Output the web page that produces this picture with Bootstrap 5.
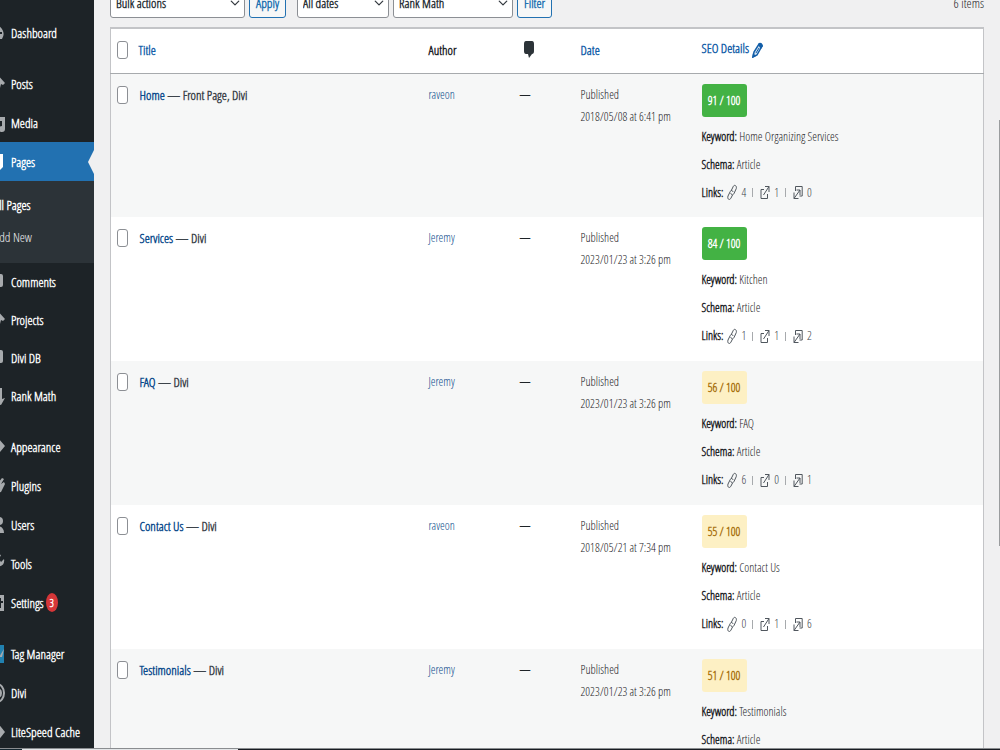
<!DOCTYPE html>
<html lang="en">
<head>
<meta charset="utf-8">
<meta name="viewport" content="width=device-width, initial-scale=1">
<title>Pages</title>
<link href="https://cdn.jsdelivr.net/npm/bootstrap@5.3.0/dist/css/bootstrap.min.css" rel="stylesheet">
<style>
body{font-family:"Open Sans Condensed Light","Open Sans Condensed","Roboto Condensed","Liberation Sans",sans-serif;font-size:13px;line-height:22px;background:#f0f0f1;color:#1d2327}
a{color:#135ea8;text-decoration:none}
.shell{height:100vh}
.side{width:94px;background:#1d2327;padding-top:13px}
.side ul{margin:0 0 0 -15px}
.side .group{margin-bottom:12px}
.side .nav-link{height:39px;padding:0;color:#f6f7f7;font-size:13px;font-weight:600;gap:6px}
.side .tight .nav-link{height:38px}
.side svg{width:20px;height:20px;fill:#a7aaad;flex:none}
.side .nav-link.current{background:#2271b1;color:#fff}
.side .current svg{fill:#fff}
.side .current::after{content:"";margin-left:auto;border:12px solid transparent;border-left:0;border-right:6px solid #f0f0f1}
.submenu{background:#2c3338;height:82px;padding:8px 0 0 9px}
.submenu a{display:block;line-height:32px;color:#f0f0f1}
.submenu a.here{color:#fff;font-weight:600}
.count{background:#d63638;color:#fff;border-radius:50%;width:12px;height:19px;font-size:11px;line-height:19px;margin-left:-4px}
.tools{margin-top:-12px;margin-bottom:9px}
.tools .form-select,.tools .btn{height:30px;font-size:13px;line-height:20px;border-radius:3px;padding:0 6px;font-weight:600}
.tools .form-select{border-color:#8c8f94;color:#2c3338;background-position:right 4px center;background-size:10px 14px;padding:0 16px 0 5px}
.tools .btn{color:#2271b1;border-color:#2271b1;background:#f6f7f7}
.tools .pick-bulk{width:135px}.tools .pick-date{width:92px;margin-left:11px}.tools .pick-rank{width:120px}
.grid-list{background:#fff;border:1px solid #c3c4c7;border-top-width:2px;table-layout:fixed;font-size:12px}
.grid-list>thead>tr>th,.grid-list>tbody>tr>td{background:transparent;box-shadow:none;border:0;padding:10px 0 0;vertical-align:top;color:#1d2327}
.grid-list>thead>tr{height:45px;border-bottom:1px solid #a7aaad}
.grid-list>thead>tr>th{font-size:13px;font-weight:600}
.grid-list>thead>tr>th.seo{padding-top:8px}
.grid-list>tbody>tr{height:144px}
.grid-list>tbody>tr:nth-child(odd){background:#f6f7f7}
.grid-list>tbody>tr>.heading{font-size:13px;font-weight:600;color:#3c434a;padding-left:1px}
.grid-list>tbody>tr>.none{font-size:11px;font-weight:600}
.grid-list>tbody a{color:#0a4b8c}
.c-check{width:28px}.c-author{width:91px}.c-note{width:61px}.c-date{width:121px}.c-seo{width:282px}
.tick{appearance:none;width:11px;height:18px;margin:2px 0 0 6px;border:1px solid #8c8f94;border-radius:3px;background:#fff;display:block}
.score{display:block;width:45px;height:33px;line-height:33px;border-radius:3px;text-align:center;font-weight:600;font-size:12px;margin-bottom:6px}
.good{background:#43b244;color:#fff}
.fair{background:#fdf0c4;color:#a8710f}
.facts{line-height:28px;margin:0}
.facts b{font-weight:600}
.facts svg{width:10px;height:17px;fill:none;stroke:#50575e;stroke-width:1}
.links .num{color:#3c434a}
.links .bar{width:1px;height:9px;background:#a7aaad;margin:0 3px 0 2px}
.status{height:2px;border-top:1px solid #8a8d90}
.status .url{width:216px;background:#e3e6e8}
.status .start{width:22px;background:#14262f}
.status .rest{background:#191c22}
.thumb{width:1px;height:426px;top:120px;background:#9a9c9e}
</style>
</head>
<body class="overflow-hidden">
<svg class="d-none" aria-hidden="true">
<symbol id="i-link" viewBox="0 0 10 17"><path d="M4 7 6 3C7 0 10 1.500 9.300 4.500L7 9.500C6 11.500 4 11 3.800 9M6 8C5.500 6 4 6 3 8L1 12C0 15 2.500 17 4 14L5.500 11"/></symbol>
<symbol id="i-out" viewBox="0 0 10 17"><path d="M4 5.500H1V14.500H7.500V10M5 2.500H9V8M9 2.500 3.500 11"/></symbol>
<symbol id="i-in" viewBox="0 0 10 17"><path d="M2.500 7V2.500H9.200V12H6.500M1 8.500V14.500H5.500M1 14.500 7 6M3.500 6H7V11"/></symbol>
</svg>
<div class="shell d-flex overflow-hidden">
<aside class="side flex-shrink-0 overflow-hidden">
<ul class="list-unstyled group"><li><a class="nav-link d-flex align-items-center" href="#"><svg viewBox="0 0 20 20"><path fill-rule="evenodd" d="M10 2a9 9 0 0 1 7 14H3A9 9 0 0 1 10 2zM9 4v2h2V4zM15 9v2h2V9zM10 13l5-5-3 7h-3z"/></svg>Dashboard</a></li></ul>
<ul class="list-unstyled mb-0">
<li><a class="nav-link d-flex align-items-center" href="#"><svg viewBox="0 0 20 20"><path d="M12 0l8 9-2 2-2-1-1 4v5l-8-8h4l4-4-3-3z"/></svg>Posts</a></li>
<li><a class="nav-link d-flex align-items-center" href="#"><svg viewBox="0 0 20 20"><path fill-rule="evenodd" d="M2 2h12v9H2zM15 4h5v12a3 3 0 1 1-3-3V8h-2z"/></svg>Media</a></li>
<li><a class="nav-link current d-flex align-items-center" href="#" aria-current="page"><svg viewBox="0 0 20 20"><path d="M5 2h13v13l-4 4H5z"/></svg>Pages</a></li>
<li class="submenu"><a class="here" href="#">All Pages</a><a href="#">Add New</a></li>
</ul>
<ul class="list-unstyled group tight">
<li><a class="nav-link d-flex align-items-center" href="#"><svg viewBox="0 0 20 20"><path d="M4 2h12q2 0 2 2v9q0 2-2 2h-6l-4 4v-4H4z"/></svg>Comments</a></li>
<li><a class="nav-link d-flex align-items-center" href="#"><svg viewBox="0 0 20 20"><path d="M12 0l8 9-2 2-2-1-1 4v5l-8-8h4l4-4-3-3z"/></svg>Projects</a></li>
<li><a class="nav-link d-flex align-items-center" href="#"><svg viewBox="0 0 20 20"><path d="M4 2h12q2 0 2 2v9q0 2-2 2H4z"/></svg>Divi DB</a></li>
<li><a class="nav-link d-flex align-items-center" href="#"><svg viewBox="0 0 20 20"><path d="M8 2h9v11l3-1-4 7-7-2zM3 10h4v7H3z"/></svg>Rank Math</a></li>
</ul>
<ul class="list-unstyled group">
<li><a class="nav-link d-flex align-items-center" href="#"><svg viewBox="0 0 20 20"><path d="M14 2l6 7-5 6-4-2-5 5 6-9z"/></svg>Appearance</a></li>
<li><a class="nav-link d-flex align-items-center" href="#"><svg viewBox="0 0 20 20"><path d="M17 2l2 1-3 5 3-2 1 2-4 8-6 1-5 3 3-7z"/></svg>Plugins</a></li>
<li><a class="nav-link d-flex align-items-center" href="#"><svg viewBox="0 0 20 20"><circle cx="14" cy="6" r="4"/><path d="M7 18c0-9 12-9 12 0z"/></svg>Users</a></li>
<li><a class="nav-link d-flex align-items-center" href="#"><svg viewBox="0 0 20 20"><path d="M16 1l-2 4 2 3 3-3c1 5-2 8-6 7l-8 7-3-2 9-9c0-5 2-8 5-7z"/></svg>Tools</a></li>
<li><a class="nav-link d-flex align-items-center" href="#"><svg viewBox="0 0 20 20"><path fill-rule="evenodd" d="M2 2h17v16H2zM15 5v3h-2v2h2v5h1v-5h2V8h-2V5z"/></svg>Settings <span class="count text-center">3</span></a></li>
</ul>
<ul class="list-unstyled">
<li><a class="nav-link d-flex align-items-center" href="#"><svg viewBox="0 0 20 20"><path fill="#2181b0" d="M2 1h17v18H2z"/><path d="M14 13l5-8-2 8z"/></svg>Tag Manager</a></li>
<li><a class="nav-link d-flex align-items-center" href="#"><svg viewBox="0 0 20 20"><ellipse cx="12" cy="10" rx="7" ry="9" fill="none" stroke="#a7aaad" stroke-width="2"/><path d="M12 5q5 0 5 5t-5 5z"/></svg>Divi</a></li>
<li><a class="nav-link d-flex align-items-center" href="#"><svg viewBox="0 0 20 20"><path d="M12 0l8 10-8 10-8-10z"/></svg><span class="text-nowrap">LiteSpeed Cache</span></a></li>
</ul>
</aside>
<main class="flex-grow-1 px-3 overflow-hidden">
<form class="tools d-flex align-items-center">
<select class="form-select pick-bulk me-1" aria-label="Bulk actions"><option>Bulk actions</option></select>
<button class="btn" type="button">Apply</button>
<select class="form-select pick-date me-1" aria-label="Date"><option>All dates</option></select>
<select class="form-select pick-rank me-1" aria-label="Rank Math"><option>Rank Math</option></select>
<button class="btn" type="button">Filter</button>
<span class="ms-auto">6 items</span>
</form>
<table class="table grid-list mb-0">
<colgroup><col class="c-check"><col><col class="c-author"><col class="c-note"><col class="c-date"><col class="c-seo"></colgroup>
<thead><tr>
<th><input class="tick" type="checkbox" aria-label="Select all"></th><th><a href="#">Title</a></th><th>Author</th>
<th><svg class="d-block ms-1" width="10" height="20" viewBox="0 0 10 20" role="img" aria-label="Comments"><path fill="#2c3338" d="M2 2h6q2 0 2 3v7q0 3-2 3L5 19 4 15H2q-2 0-2-3V5q0-3 2-3z"/></svg></th>
<th><a href="#">Date</a></th>
<th class="seo"><a href="#">SEO Details <svg width="11" height="16" viewBox="0 0 11 16" aria-hidden="true"><path fill="#cfe0ef" stroke="#135ea8" stroke-width="1.500" d="M7 2q2-1 3 2L5 13l-4 2 1-5z"/><path fill="#135ea8" d="M6 3 7 1q3-1 4 3L9 7zM0 16l1-5 3 3z"/><path d="M4 11 7 6" stroke="#135ea8" stroke-width="1"/></svg></a></th>
</tr></thead>
<tbody id="rows"></tbody>
</table>
</main>
</div>
<div class="status fixed-bottom d-flex"><div class="start"></div><div class="url"></div><div class="rest flex-grow-1"></div></div>
<div class="thumb position-fixed end-0"></div>
<script src="https://cdn.jsdelivr.net/npm/bootstrap@5.3.0/dist/js/bootstrap.bundle.min.js"></script>
<script>
const pages = [
  ['Home', 'Front Page, Divi', 'raveon', '2018/05/08 at 6:41 pm', 91, 'Home Organizing Services', 4, 1, 0],
  ['Services', 'Divi', 'Jeremy', '2023/01/23 at 3:26 pm', 84, 'Kitchen', 1, 1, 2],
  ['FAQ', 'Divi', 'Jeremy', '2023/01/23 at 3:26 pm', 56, 'FAQ', 6, 0, 1],
  ['Contact Us', 'Divi', 'raveon', '2018/05/21 at 7:34 pm', 55, 'Contact Us', 0, 1, 6],
  ['Testimonials', 'Divi', 'Jeremy', '2023/01/23 at 3:26 pm', 51, 'Testimonials', 0, 1, 0]
];
const icon = n => `<svg aria-hidden="true"><use href="#i-${n}"/></svg>`;
document.getElementById('rows').innerHTML = pages.map(([t, state, who, when, score, key, a, b, c]) => `<tr>
<td><input class="tick" type="checkbox" aria-label="Select ${t}"></td>
<td class="heading"><a href="#">${t}</a> — ${state}</td>
<td><a href="#">${who}</a></td><td class="none">—</td>
<td>Published<br>${when}</td>
<td><span class="score ${score > 80 ? 'good' : 'fair'}">${score} / 100</span>
<p class="facts"><b>Keyword:</b> ${key}</p><p class="facts"><b>Schema:</b> Article</p>
<p class="facts links d-flex align-items-center gap-1"><b>Links:</b>${icon('link')}<span class="num">${a}</span><span class="bar"></span>${icon('out')}<span class="num">${b}</span><span class="bar"></span>${icon('in')}<span class="num">${c}</span></p></td></tr>`).join('');
</script>
</body>
</html>
